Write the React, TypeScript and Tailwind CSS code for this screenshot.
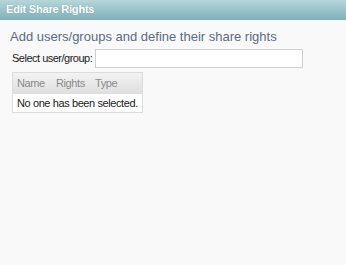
export default function App() {
  return (
    <div className="h-[265px] w-[346px] bg-[#f9f9f9] font-['Liberation_Sans',Arial,sans-serif] overflow-hidden">
      <div className="h-[20px] bg-gradient-to-b from-[#b6d6da] to-[#7fb0ba] pl-[6px] text-[11px] font-bold leading-[19px] tracking-[-0.2px] text-white [text-shadow:0_0_1px_rgba(60,110,120,0.5)]">
        Edit Share Rights
      </div>
      <div className="px-[10px] pt-[9px]">
        <div className="text-[13px] leading-[16px] text-[#5b6b82]">Add users/groups and define their share rights</div>
        <div className="mt-[4px] flex items-center pl-[2px]">
          <span className="w-[83px] whitespace-nowrap text-[11px] tracking-[-0.5px] text-[#222]">Select user/group:</span>
          <input className="h-[19px] w-[208px] border border-[#cfcfcf] bg-white outline-none" />
        </div>
        <div className="mt-[4px] ml-[2px] w-[131px] border border-[#dcdcdc] bg-white text-[11px] tracking-[-0.4px]">
          <div className="flex h-[21px] items-center bg-gradient-to-b from-[#f3f3f3] to-[#dedede] pl-[4px] text-[#8a8a8a]">
            <span className="w-[39px]">Name</span>
            <span className="w-[39px]">Rights</span>
            <span>Type</span>
          </div>
          <div className="flex h-[18px] items-center whitespace-nowrap pl-[4px] text-[#222]">No one has been selected.</div>
        </div>
      </div>
    </div>
  );
}
